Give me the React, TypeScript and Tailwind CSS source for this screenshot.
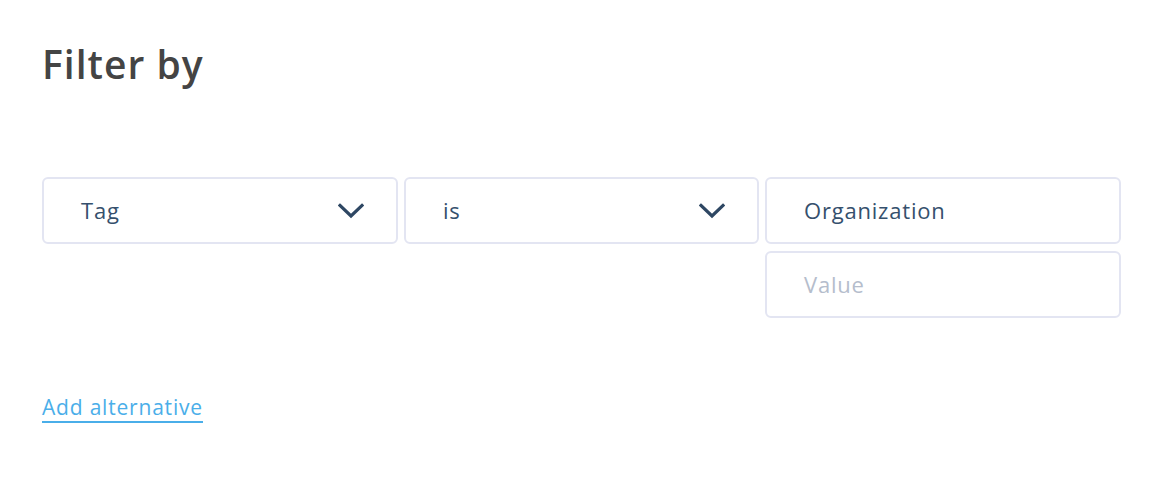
import React from "react";

function Chevron() {
  return (
    <svg width="26" height="16" viewBox="0 0 26 16" fill="none" className="shrink-0">
      <path d="M2 2.5 L13 13 L24 2.5" stroke="#2e4763" strokeWidth="3.2" strokeLinecap="square" />
    </svg>
  );
}

function Box({ children, className = "" }: { children: React.ReactNode; className?: string }) {
  return (
    <div
      className={`h-[67px] rounded-[6px] border-2 border-[#e3e5f2] flex items-center pl-[37px] pr-[32px] bg-white ${className}`}
    >
      {children}
    </div>
  );
}

export default function App() {
  return (
    <div className="w-[1166px] h-[486px] bg-white pl-[42px] pt-[38px]" style={{ fontFamily: "'Open Sans', 'Noto Sans', sans-serif" }}>
      <h1 className="text-[39px] font-semibold text-[#444444] leading-[52px] tracking-[1px]">Filter by</h1>
      <div className="mt-[87px] grid grid-cols-[356px_355px_356px] gap-x-[6px] gap-y-[7px]">
        <Box className="justify-between">
          <span className="text-[22px] text-[#35506d] tracking-[0.8px]">Tag</span>
          <Chevron />
        </Box>
        <Box className="justify-between">
          <span className="text-[22px] text-[#35506d] tracking-[0.8px]">is</span>
          <Chevron />
        </Box>
        <Box>
          <span className="text-[22px] text-[#35506d] tracking-[0.8px]">Organization</span>
        </Box>
        <div />
        <div />
        <Box>
          <span className="text-[22px] text-[#b5bdcc] tracking-[0.8px]">Value</span>
        </Box>
      </div>
      <div className="mt-[76px]">
        <span className="inline-block text-[21px] text-[#4aaee9] border-b-2 border-[#4aaee9] leading-[26px] pb-[1px] tracking-[0.8px]">
          Add alternative
        </span>
      </div>
    </div>
  );
}
